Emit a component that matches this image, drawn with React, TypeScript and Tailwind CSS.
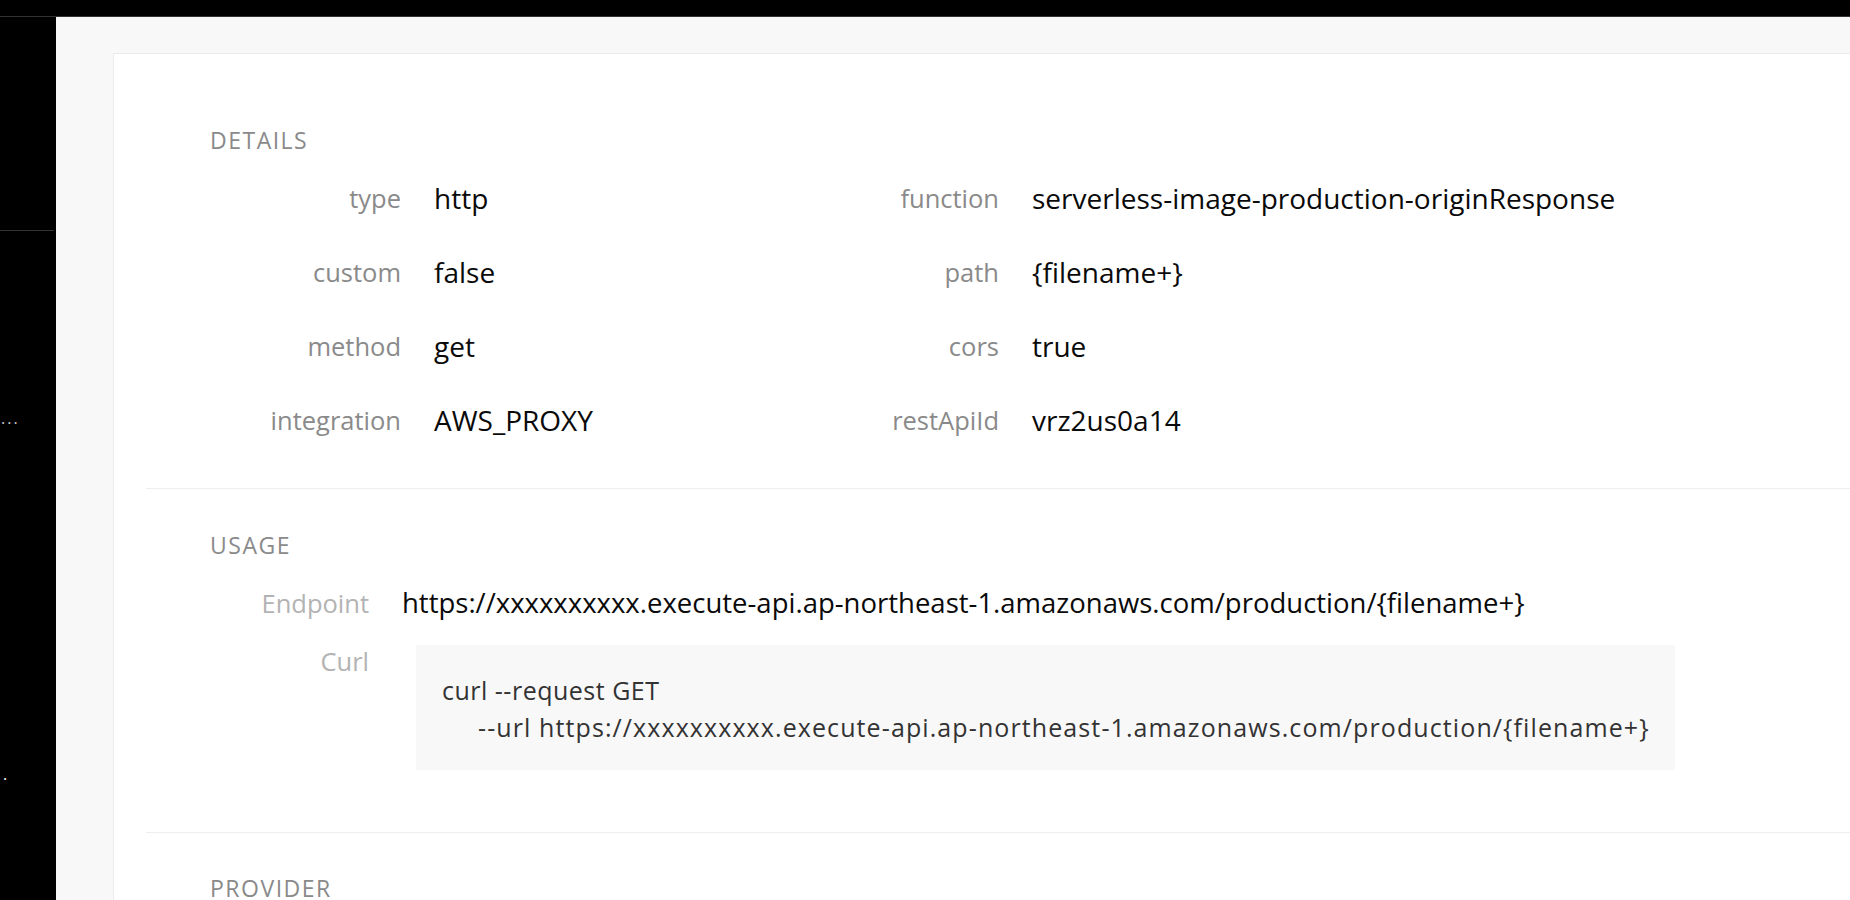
import React from "react";

const FONT = '"Open Sans", "Liberation Sans", sans-serif';

const details: [string, string, string, string][] = [
  ["type", "http", "function", "serverless-image-production-originResponse"],
  ["custom", "false", "path", "{filename+}"],
  ["method", "get", "cors", "true"],
  ["integration", "AWS_PROXY", "restApiId", "vrz2us0a14"],
];

const URL = "https://xxxxxxxxxx.execute-api.ap-northeast-1.amazonaws.com/production/{filename+}";

function Heading({ children }: { children: React.ReactNode }) {
  return (
    <div className="pl-[64px] text-[23px] leading-[28px] tracking-[1.5px] text-[#8a8a8a]">{children}</div>
  );
}

function Label({ children }: { children: React.ReactNode }) {
  return (
    <div className="h-[74px] flex items-center justify-end text-[25.5px] text-[#8a8a8a] whitespace-nowrap">
      {children}
    </div>
  );
}

function Value({ children }: { children: React.ReactNode }) {
  return (
    <div className="h-[74px] flex items-center pl-[33px] text-[28px] text-[#0a0a0a] whitespace-nowrap">
      {children}
    </div>
  );
}

export default function App() {
  return (
    <div className="w-[1850px] h-[900px] bg-black overflow-hidden flex flex-col" style={{ fontFamily: FONT }}>
      <div className="h-[17px] bg-black border-b border-[#333] shrink-0" />
      <div className="flex flex-1 min-h-0">
        <aside className="w-[56px] bg-black shrink-0 flex flex-col overflow-hidden">
          <div className="h-[214px] border-b border-[#333] w-[54px] shrink-0" />
          <div className="mt-[180px] text-[16px] leading-[14px] tracking-[2px] text-[#c8c8c8] pl-[1px]">...</div>
          <div className="mt-[341px] text-[16px] leading-[16px] text-white pl-[3px]">.</div>
        </aside>
        <main className="flex-1 bg-[#f8f8f8] pl-[57px] pt-[36px] overflow-hidden">
          <div className="bg-white border-l border-t border-[#ececec] h-full pl-[32px]">
            <section className="pt-[72px] pb-[31px] border-b border-[#eeeeee]">
              <Heading>DETAILS</Heading>
              <div className="mt-[7px] pl-[64px] grid grid-cols-[191px_407px_191px_1fr]">
                {details.map(([l1, v1, l2, v2]) => (
                  <React.Fragment key={l1}>
                    <Label>{l1}</Label>
                    <Value>{v1}</Value>
                    <Label>{l2}</Label>
                    <Value>{v2}</Value>
                  </React.Fragment>
                ))}
              </div>
            </section>
            <section className="pt-[42px] pb-[62px] border-b border-[#eeeeee]">
              <Heading>USAGE</Heading>
              <div className="pl-[64px] mt-[28px] flex items-start">
                <div className="w-[159px] text-right text-[25.5px] leading-[32px] text-[#b3b3b3]">Endpoint</div>
                <div className="ml-[33px] text-[27.5px] leading-[32px] text-[#0a0a0a] whitespace-nowrap">{URL}</div>
              </div>
              <div className="pl-[64px] mt-[26px] flex items-start">
                <div className="w-[159px] text-right text-[25.5px] leading-[32px] text-[#b3b3b3]">Curl</div>
                <div className="ml-[47px] w-[1259px] bg-[#f8f8f8] pt-[27px] pb-[24px] pl-[26px] text-[25px] leading-[37px] text-[#333] whitespace-nowrap">
                  <div className="tracking-[0.5px]">curl --request GET</div>
                  <div className="pl-[36px] tracking-[1.1px]">--url {URL}</div>
                </div>
              </div>
            </section>
            <section className="pt-[41px]">
              <Heading>PROVIDER</Heading>
            </section>
          </div>
        </main>
      </div>
    </div>
  );
}
